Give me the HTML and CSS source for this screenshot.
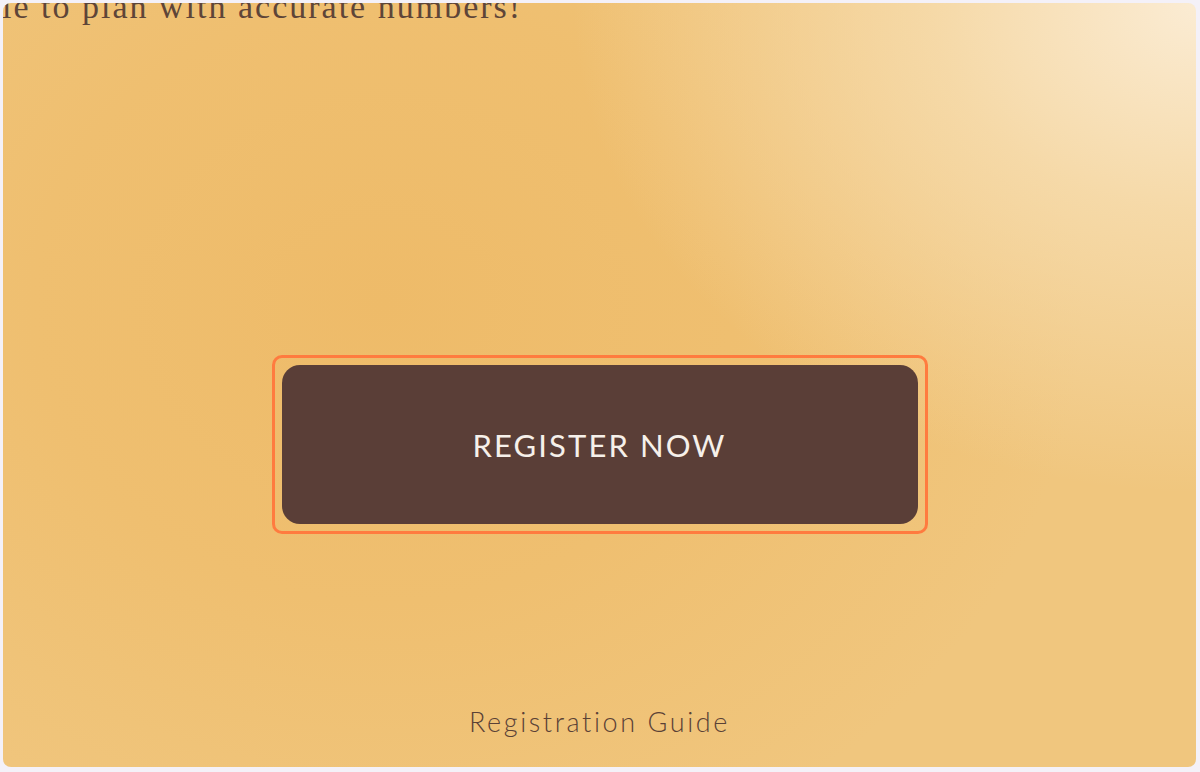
FILE: index.html
```html
<!DOCTYPE html>
<html>
<head>
<meta charset="utf-8">
<link rel="stylesheet" href="styles.css">
</head>
<body>
<div class="frame">
  <main class="panel">
    <p class="lead">le to plan with accurate numbers!</p>
    <div class="cta">
      <div class="focus-ring">
        <button class="register">REGISTER NOW</button>
      </div>
    </div>
    <a class="guide">Registration Guide</a>
  </main>
</div>
</body>
</html>
```

FILE: styles.css
```css
html, body {
  margin: 0;
  padding: 0;
  background: #f4f1f8;
}
.frame {
  width: 1200px;
  height: 772px;
  box-sizing: border-box;
  padding: 3px 4px 5px 3px;
}
.panel {
  height: 100%;
  border-radius: 8px;
  overflow: hidden;
  display: flex;
  flex-direction: column;
  align-items: center;
  background:
    radial-gradient(ellipse 900px 700px at 1200px 0px, rgba(251,236,212,1) 0%, rgba(247,222,178,0.8) 30%, rgba(240,194,120,0) 70%),
    radial-gradient(ellipse 700px 600px at 380px 300px, #eebb69 0%, #efbf70 50%, #f0c67e 100%);
}
.lead {
  align-self: flex-start;
  margin: -14px 0 0 -1px;
  font-family: "Liberation Serif", "DejaVu Serif", serif;
  font-size: 34px;
  line-height: 36px;
  color: #5e4538;
  letter-spacing: 2px;
  white-space: nowrap;
}
.cta {
  margin-top: 330px;
}
.focus-ring {
  border: 3px solid #ff7b3f;
  border-radius: 10px;
  padding: 7px;
}
.register {
  display: block;
  width: 636px;
  height: 159px;
  border: none;
  border-radius: 18px;
  background: #5a3e37;
  color: #f6f0ea;
  font-family: "Lato", "Inter", sans-serif;
  font-size: 31px;
  font-weight: 400;
  letter-spacing: 2.1px;
  padding: 0;
}
.guide {
  margin-top: 171px;
  font-family: "Lato", "Inter", sans-serif;
  font-weight: 300;
  font-size: 27px;
  letter-spacing: 2.6px;
  color: #5a4136;
}
```
